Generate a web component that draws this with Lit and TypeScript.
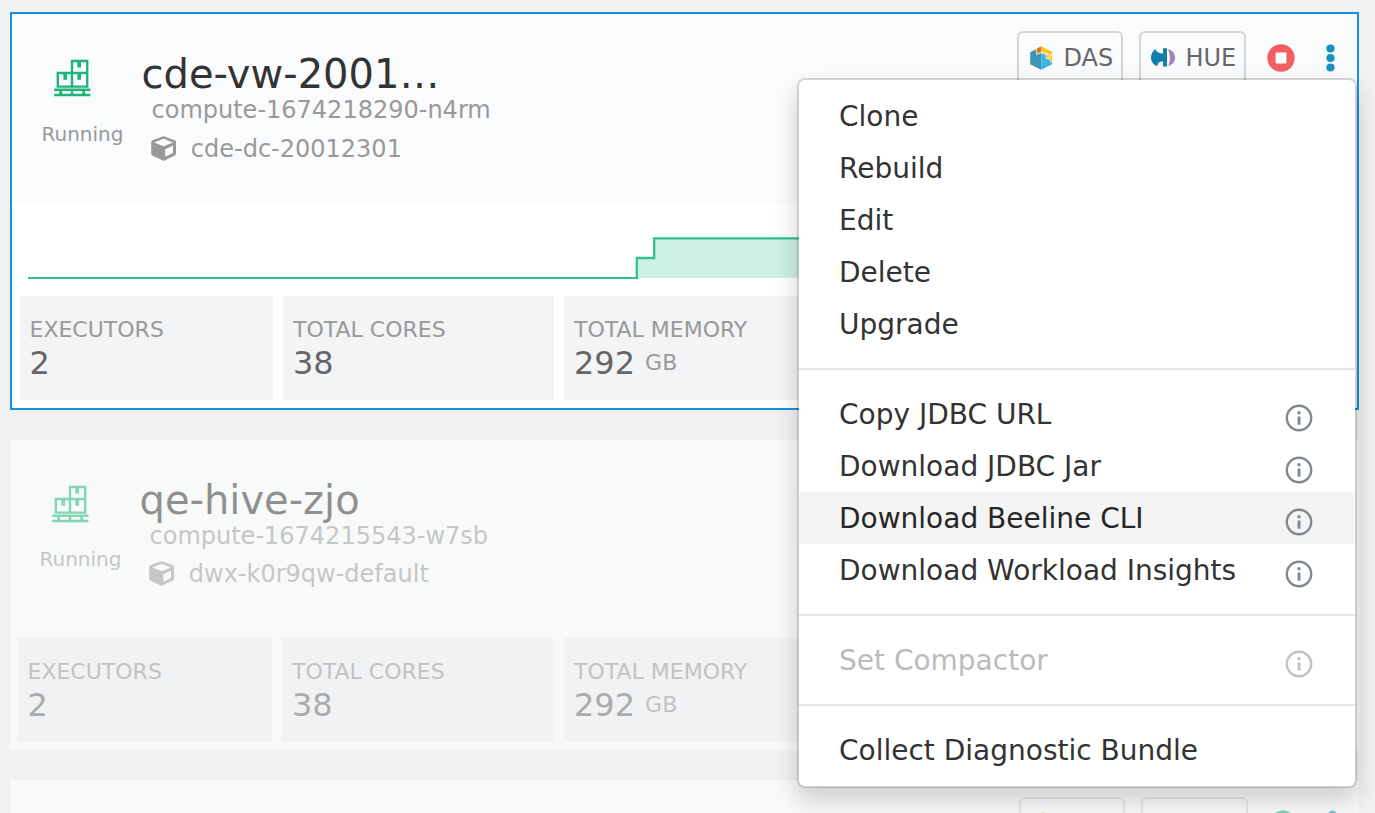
import { LitElement, html, css, svg, nothing } from "lit";
import { customElement, property } from "lit/decorators.js";

const warehouseIcon = html`<svg width="37" height="38" viewBox="0 0 37 38" fill="none" stroke="currentColor" stroke-width="2.4">
  <path d="M18 2H33.2V27.6H3.8V14H18Z M18 14H33 M18 14V27.6" />
  <path stroke-width="3.7" d="M25.2 3V8.4 M11.2 15V20.8 M25.2 15V20.8" />
  <path d="M0.2 30.8H36.4 M0.2 36H36.4 M18 31V36" />
  <path stroke-width="2.8" d="M6.7 31V36 M29.7 31V36" />
</svg>`;

const cubeIcon = html`<svg width="26" height="26" viewBox="0 0 26 26" fill="currentColor" fill-rule="evenodd">
  <path d="M12.6 0.2Q13 0.2 13.5 0.4L23.8 4.2Q25 4.7 25 6V17.6Q25 18.8 23.9 19.4L13.5 24.4Q12.6 24.9 11.7 24.4L1.3 19.4Q0.2 18.8 0.2 17.6V6Q0.2 4.7 1.4 4.2L11.7 0.4Q12.2 0.2 12.6 0.2Z M12.6 2.8L3.2 6.4L12.6 10.3L22 6.4Z M14.2 13.2V20.8L22 17V9.7Z" />
</svg>`;

const dasIcon = html`<svg width="23" height="24" viewBox="0 0 23 24">
  <path fill="#4190b5" d="M0.2 6.2L6.6 3V8.6L11.2 7V23.8L0.2 18.2Z" />
  <path fill="#3eb3e6" d="M11.2 7L16 8.4V12.4L20 14V16.6H22.2V18.2L11.2 23.8Z" />
  <path fill="#e07800" d="M7 2.4L11.2 0.2V6.2L7 8Z" />
  <path fill="#ffc425" d="M11.2 0.2L22.2 5.8V9L16.6 7.6L11.2 6.2Z M16 8.2L22.2 9.8V16H20.4V13.2L16 11.8Z" />
  <path stroke="#fafbfd" stroke-width="0.6" fill="none" d="M6.7 2.8V8.4L11.2 6.5L16 7.9L22.4 9.4 M16 11.8V8 M18 10.8L22.2 12" />
</svg>`;

const hueIcon = html`<svg width="24" height="19" viewBox="0 0 24 19">
  <path fill="#107fb0" d="M4.4 1C5.2 4 8 5.4 12 5.4V0.2H16V18.5H12V13.4C8 13.4 6.8 14.6 6.4 18.2C2.4 17 0 13.6 0 9.8C0 6.2 1.6 2.9 4.4 1Z" />
  <path fill="#a681c0" d="M17 1.2C21.4 2 24 5.4 24 9.6C24 13.8 21.6 17 17.2 18.2C19.4 13.2 19.4 6.2 17 1.2Z" />
</svg>`;

const dotsIcon = html`<svg width="9" height="28" viewBox="0 0 9 28" fill="#1691c4">
  <circle cx="4.5" cy="4.5" r="4.1" /><circle cx="4.5" cy="14" r="4.1" /><circle cx="4.5" cy="23.5" r="4.1" />
</svg>`;

const infoIcon = html`<svg width="28" height="28" viewBox="0 0 28 28">
  <circle cx="14" cy="14" r="12.2" fill="none" stroke="currentColor" stroke-width="2.4" />
  <circle cx="14" cy="8.7" r="1.7" fill="currentColor" />
  <rect x="12.6" y="12.5" width="2.9" height="8.2" fill="currentColor" />
</svg>`;

const stateIcon = (kind: string) => html`<svg width="28" height="28" viewBox="0 0 28 28">
  <circle cx="14" cy="14" r="13.7" fill=${kind === "stop" ? "#f15f62" : "#1fb579"} />
  ${kind === "stop"
    ? svg`<rect x="8.6" y="8.6" width="10.8" height="10.8" rx="0.8" fill="#fff" />`
    : svg`<path d="M10.5 8.5V19.5L20 14Z" fill="#fff" />`}
</svg>`;

interface Warehouse {
  name?: string;
  compute?: string;
  catalog?: string;
  state?: string;
  selected?: boolean;
}

@customElement("warehouse-card")
export class WarehouseCard extends LitElement {
  @property({ attribute: false }) data!: Warehouse;

  static styles = css`
    :host { display: block; }
    svg { display: block; flex: none; }
    .card { background: #f8faf9; }
    .card.selected { background: #fff; border: 2px solid #1192e0; }
    .selected .header { background: #fafbfd; }
    .faded .header, .faded .label, .faded .unit { opacity: 0.53; }
    .faded .value { opacity: 0.5; }
    .header { display: flex; justify-content: flex-end; height: 190px; box-sizing: border-box; padding-right: 22px; }
    .status {
      width: 130px; box-sizing: border-box; padding: 44.5px 0 0 29.5px;
      color: #999; font-size: 20px; line-height: 24px;
    }
    .status svg { color: #1fb579; margin: 0 0 25.5px 12px; }
    .faded .status svg { margin-bottom: 24.5px; }
    .names { flex: 1; padding-top: 36px; color: #999; font-size: 24px; line-height: 28px; }
    .title { color: #333; font-size: 40px; line-height: 48px; margin-left: -0.5px; }
    .compute { margin: -2px 0 0 9.5px; }
    .catalog { display: flex; align-items: center; gap: 14px; margin: 11px 0 0 8.8px; }
    .faded .catalog { margin-top: 10px; }
    .actions { display: flex; align-items: center; height: 54px; padding-top: 17px; }
    .button {
      display: flex; align-items: center; box-sizing: border-box; height: 54px; width: 106px;
      border: 2px solid #d3d5d8; border-radius: 6px; padding-left: 11px; gap: 10.5px;
      color: #666; font-size: 24px; line-height: 28px; margin-right: 16px;
    }
    .button svg { margin-bottom: 1px; }
    .button.hue { width: 107px; padding-left: 10px; margin-right: 20px; }
    .state { margin: 0 31.5px 1px 0.5px; }
    .dots { margin-bottom: 1px; }
    .chart { height: 92px; }
    .stats { display: grid; grid-template-columns: 254px 272px 1fr; gap: 10px; padding: 8px; }
    .selected .stats { padding-top: 0; grid-template-columns: 253px 271px 1fr; }
    .stat {
      background: #f3f4f6; height: 104px; box-sizing: border-box; padding: 21px 10px 0;
      color: #999; font-size: 22px; line-height: 26px;
    }
    .stat:first-child { padding-left: 9.5px; }
    .faded .stat { background: #f1f2f4; }
    .row { display: flex; align-items: center; gap: 10px; margin-top: 1px; }
    .value { color: #666; font-size: 32px; line-height: 38px; }
  `;

  stat(label: string, value: string, unit = "") {
    return html`
      <div class="stat">
        <div class="label">${label}</div>
        <div class="row"><span class="value">${value}</span>${unit ? html`<span class="unit">${unit}</span>` : nothing}</div>
      </div>`;
  }

  render() {
    const d = this.data;
    return html`
      <div class="card ${d.selected ? "selected" : "faded"}">
        <div class="header">
          ${d.name
            ? html`<div class="status">${warehouseIcon}Running</div>
                <div class="names">
                  <div class="title">${d.name}</div>
                  <div class="compute">${d.compute}</div>
                  <div class="catalog">${cubeIcon}<span>${d.catalog}</span></div>
                </div>`
            : nothing}
          ${d.state
            ? html`<div class="actions">
                <div class="button">${dasIcon}${d.selected ? "DAS" : nothing}</div>
                <div class="button hue">${hueIcon}${d.selected ? "HUE" : nothing}</div>
                <div class="state">${stateIcon(d.state)}</div>
                <div class="dots">${dotsIcon}</div>
              </div>`
            : nothing}
        </div>
        ${d.selected
          ? html`<svg class="chart" width="1345" height="92" viewBox="0 0 1345 92">
              <path fill="#cdf0e4" d="M625 74V54H642V34.4H1329V74Z" />
              <path fill="none" stroke="#33c08f" stroke-width="2.3" d="M624 74H624.8V54H642.2V34.4H1329" />
              <path fill="none" stroke="#33c08f" stroke-width="2" d="M16 74H625.8" />
            </svg>`
          : nothing}
        ${d.name
          ? html`<div class="stats">
              ${this.stat("EXECUTORS", "2")}${this.stat("TOTAL CORES", "38")}${this.stat("TOTAL MEMORY", "292", "GB")}
            </div>`
          : nothing}
      </div>`;
  }
}

interface Item { label: string; info?: boolean; disabled?: boolean; active?: boolean }

@customElement("action-menu")
export class ActionMenu extends LitElement {
  static styles = css`
    :host {
      display: block; box-sizing: border-box; background: #fff; background-clip: padding-box;
      border: 2px solid rgba(0, 0, 0, 0.15); border-radius: 8px;
      box-shadow: 0 12px 24px rgba(0, 0, 0, 0.175);
      font-size: 28px; line-height: 52px; color: #333;
    }
    .group { padding: 18px 0; }
    .group:first-child { padding-top: 10px; }
    .group:last-child { padding-bottom: 10px; }
    .group + .group { border-top: 2px solid #e5e5e5; }
    .item { display: flex; justify-content: space-between; height: 52px; padding: 0 42.5px 0 40px; }
    .item span { padding-top: 1px; }
    .item svg { display: block; color: #80898f; margin-top: 16px; }
    .active { background: #f4f4f4; color: #262626; }
    .disabled { color: #bbb; }
    .disabled svg { color: #bfc3c6; }
  `;

  groups: Item[][] = [
    ["Clone", "Rebuild", "Edit", "Delete", "Upgrade"].map((label) => ({ label })),
    [
      { label: "Copy JDBC URL", info: true },
      { label: "Download JDBC Jar", info: true },
      { label: "Download Beeline CLI", info: true, active: true },
      { label: "Download Workload Insights", info: true },
    ],
    [{ label: "Set Compactor", info: true, disabled: true }],
    [{ label: "Collect Diagnostic Bundle" }],
  ];

  render() {
    return this.groups.map((g) => html`<div class="group">
      ${g.map((i) => html`<div class="item ${i.active ? "active" : ""} ${i.disabled ? "disabled" : ""}">
        <span>${i.label}</span>${i.info ? infoIcon : nothing}
      </div>`)}
    </div>`);
  }
}

@customElement("app-root")
export class AppRoot extends LitElement {
  static styles = css`
    :host {
      display: block; position: relative; height: 813px; overflow: hidden; background: #f0f1f3;
      font-family: "DejaVu Sans", sans-serif;
    }
    .list { display: flex; flex-direction: column; gap: 30px; padding: 12px 16px 0 10px; }
    .menu { position: absolute; left: 797px; top: 78px; width: 560px; }
  `;

  cards: Warehouse[] = [
    { name: "cde-vw-2001…", compute: "compute-1674218290-n4rm", catalog: "cde-dc-20012301", state: "stop", selected: true },
    { name: "qe-hive-zjo", compute: "compute-1674215543-w7sb", catalog: "dwx-k0r9qw-default" },
    { state: "start" },
  ];

  render() {
    return html`
      <div class="list">${this.cards.map((c) => html`<warehouse-card .data=${c}></warehouse-card>`)}</div>
      <action-menu class="menu"></action-menu>`;
  }
}
